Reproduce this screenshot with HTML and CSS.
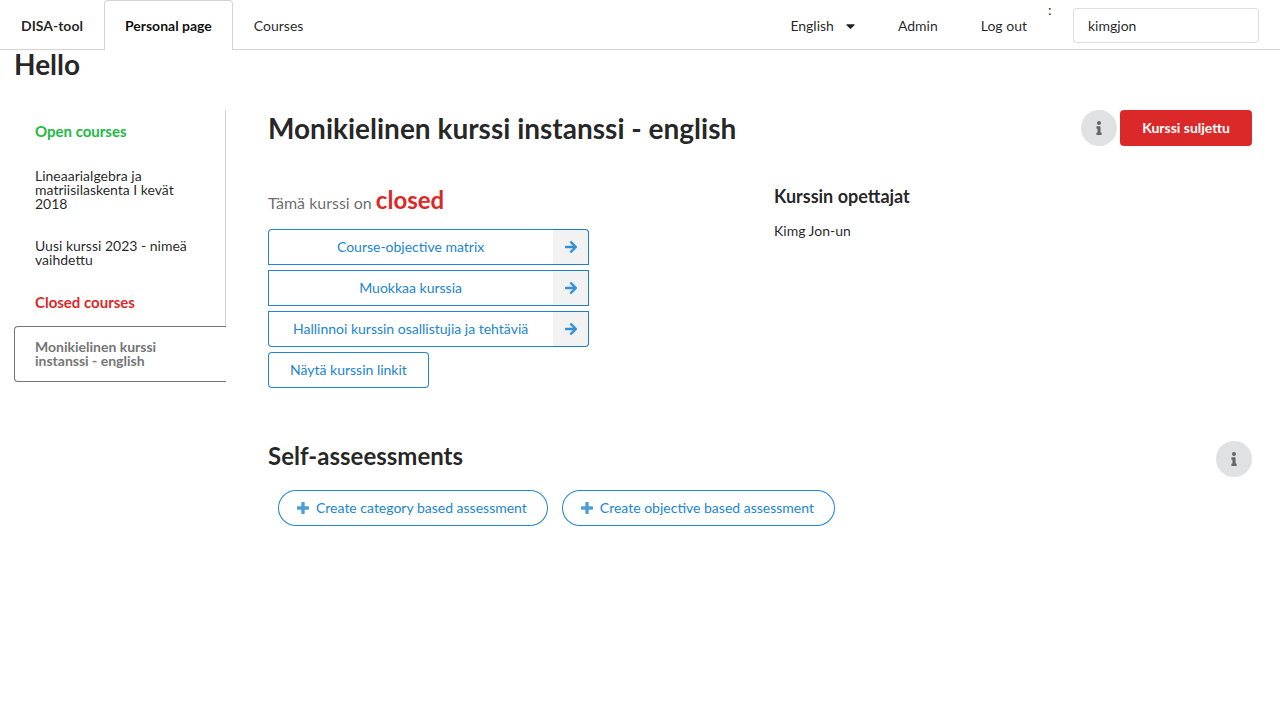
FILE: index.html
```html
<!DOCTYPE html>
<html lang="en">
<head>
<meta charset="utf-8">
<meta name="viewport" content="width=device-width, initial-scale=1">
<title>DISA-tool</title>
<link rel="stylesheet" href="styles.css">
</head>
<body>
<svg class="sprite" aria-hidden="true">
  <symbol id="arrow" viewBox="0 0 448 512"><path d="M190.5 66.9l22.2-22.2c9.4-9.4 24.6-9.4 33.9 0L441 239c9.4 9.4 9.4 24.6 0 33.9L246.6 467.3c-9.4 9.4-24.6 9.4-33.9 0l-22.2-22.2c-9.5-9.5-9.3-25 .4-34.3L311.4 296H24c-13.3 0-24-10.7-24-24v-32c0-13.3 10.7-24 24-24h287.4L190.9 101.2c-9.8-9.3-10-24.8-.4-34.3z"/></symbol>
  <symbol id="plus" viewBox="0 0 448 512"><path d="M448 294.2v-76.4c0-13.3-10.7-24-24-24H286.2V56c0-13.3-10.7-24-24-24h-76.4c-13.3 0-24 10.7-24 24v137.8H24c-13.3 0-24 10.7-24 24v76.4c0 13.3 10.7 24 24 24h137.8V456c0 13.3 10.7 24 24 24h76.4c13.3 0 24-10.7 24-24V318.2H424c13.3 0 24-10.7 24-24z"/></symbol>
  <symbol id="info" viewBox="0 0 192 512"><path d="M20 424.229h20V279.771H20c-11.046 0-20-8.954-20-20V212c0-11.046 8.954-20 20-20h112c11.046 0 20 8.954 20 20v212.229h20c11.046 0 20 8.954 20 20V492c0 11.046-8.954 20-20 20H20c-11.046 0-20-8.954-20-20v-47.771c0-11.046 8.954-20 20-20zM96 0C56.235 0 24 32.235 24 72s32.235 72 72 72 72-32.235 72-72S135.764 0 96 0z"/></symbol>
  <symbol id="caret" viewBox="0 0 320 512"><path d="M31.3 192h257.3c17.8 0 26.7 21.5 14.1 34.1L174.1 354.8c-7.8 7.8-20.5 7.8-28.3 0L17.2 226.1C4.6 213.5 13.5 192 31.3 192z"/></symbol>
</svg>
<nav class="menu">
  <a class="tab brand" href="#">DISA-tool</a>
  <a class="tab active" href="#">Personal page</a>
  <a class="tab" href="#">Courses</a>
  <div class="menu-right">
    <button class="tab language" type="button">English<svg class="caret"><use href="#caret"/></svg></button>
    <a class="tab admin" href="#">Admin</a>
    <a class="tab" href="#">Log out</a>
    <label class="colon" for="user">:</label>
    <div class="user"><input class="user-input" id="user" type="text" value="kimgjon"></div>
  </div>
</nav>
<main class="page">
  <h1 class="hello">Hello</h1>
  <div class="layout">
    <div class="side">
      <nav class="courses">
        <h2 class="group open">Open courses</h2>
        <a class="course" href="#">Lineaarialgebra ja matriisilaskenta I kevät 2018</a>
        <a class="course" href="#">Uusi kurssi 2023 - nimeä vaihdettu</a>
        <h2 class="group closed">Closed courses</h2>
        <a class="course current" href="#">Monikielinen kurssi instanssi - english</a>
      </nav>
    </div>
    <div class="content">
      <header class="row">
        <h2 class="title">Monikielinen kurssi instanssi - english</h2>
        <div class="actions">
          <button class="info" type="button" aria-label="Info"><svg class="info-icon"><use href="#info"/></svg></button>
          <button class="button danger" type="button">Kurssi suljettu</button>
        </div>
      </header>
      <div class="columns">
        <section>
          <p class="status">Tämä kurssi on <strong class="state">closed</strong></p>
          <div class="links">
            <a class="button outline split first" href="#"><span class="label">Course-objective matrix</span><span class="cap"><svg class="icon"><use href="#arrow"/></svg></span></a>
            <a class="button outline split" href="#"><span class="label">Muokkaa kurssia</span><span class="cap"><svg class="icon"><use href="#arrow"/></svg></span></a>
            <a class="button outline split last" href="#"><span class="label">Hallinnoi kurssin osallistujia ja tehtäviä</span><span class="cap"><svg class="icon"><use href="#arrow"/></svg></span></a>
            <button class="button outline single" type="button">Näytä kurssin linkit</button>
          </div>
        </section>
        <section>
          <h3 class="teachers">Kurssin opettajat</h3>
          <div class="teacher">Kimg Jon-un</div>
        </section>
      </div>
      <header class="row assessments">
        <h2 class="subtitle">Self-asseessments</h2>
        <button class="info" type="button" aria-label="Info"><svg class="info-icon"><use href="#info"/></svg></button>
      </header>
      <div class="create">
        <a class="button outline pill" href="#"><svg class="icon plus"><use href="#plus"/></svg>Create category based assessment</a>
        <a class="button outline pill" href="#"><svg class="icon plus"><use href="#plus"/></svg>Create objective based assessment</a>
      </div>
    </div>
  </div>
</main>
</body>
</html>
```

FILE: styles.css
```css
* { box-sizing: border-box; }
body {
  margin: 0;
  background: #fff;
  color: rgba(0, 0, 0, .87);
  font: 14px/20px Lato, "Open Sans", sans-serif;
}
h1, h2, h3, p { margin: 0; }
a { color: inherit; text-decoration: none; }
button, input { font: inherit; color: inherit; }
button { cursor: pointer; }
svg { fill: currentColor; flex: none; }
.sprite { display: none; }

.menu {
  display: flex;
  height: 50px;
  border-bottom: 1px solid #d4d4d5;
}
.tab {
  display: flex;
  align-items: center;
  padding: 2px 20px 0;
  border: 1px solid transparent;
  border-bottom: 0;
  background: none;
  white-space: nowrap;
}
.brand { font-weight: 700; }
.tab.active {
  margin-bottom: -1px;
  padding-bottom: 1px;
  border-color: #d4d4d5;
  border-radius: 4px 4px 0 0;
  background: #fff;
  color: rgba(0, 0, 0, .95);
  font-weight: 700;
}
.menu-right { display: flex; margin-left: auto; }
.admin { padding-left: 21px; padding-right: 21px; }
.caret { width: 9px; height: 14px; margin-left: 12px; }
.colon { width: 4px; }
.user { padding: 8px 21px 0; }
.user-input {
  display: block;
  width: 186px;
  height: 35px;
  padding: 0 14px;
  border: 1px solid rgba(34, 36, 38, .15);
  border-radius: 4px;
  background: #fff;
}

.page { padding: 0 14px; }
.hello { margin: -4px 0 28px; font-size: 28px; line-height: 36px; }
.layout { display: grid; grid-template-columns: 3fr 13fr; margin: 0 -14px; }
.side { padding: 0 14px; }
.courses { border-right: 1px solid #d4d4d5; }
.group { padding: 12px 21px 14px; font-size: 15px; line-height: 19px; }
.open { color: #21ba45; }
.closed { color: #db2828; }
.course { display: block; padding: 14px 21px; line-height: 14px; }
.current {
  margin-right: -1px;
  padding: 13px 20px;
  border: 1px solid #767676;
  border-right: 0;
  border-radius: 4px 0 0 4px;
  background: #fff;
  color: #767676;
  font-weight: 700;
}

.content { padding: 0 28px; }
.row { display: flex; align-items: flex-start; justify-content: space-between; }
.title { font-size: 28px; line-height: 36px; }
.actions { display: flex; gap: 3px; }
.button {
  display: inline-flex;
  align-items: center;
  justify-content: center;
  min-height: 36px;
  padding: 0 21px;
  border: 0;
  border-radius: 4px;
  white-space: nowrap;
}
.danger { padding: 0 22px; background: #db2828; color: #fff; font-weight: 700; }
.info {
  display: flex;
  align-items: center;
  justify-content: center;
  width: 36px;
  height: 36px;
  padding: 0;
  border: 0;
  border-radius: 50%;
  background: #e0e1e2;
  color: #656667;
}
.info-icon { width: 6px; height: 14px; }

.columns { display: grid; grid-template-columns: 1fr 1fr; gap: 28px; margin-top: 38px; }
.status { color: rgba(0, 0, 0, .6); font-size: 16px; line-height: 32px; }
.state { color: #db2828; font-size: 24px; }
.links { display: grid; width: max-content; gap: 5px; margin-top: 10px; }
.outline { background: none; box-shadow: inset 0 0 0 1px #2185d0; color: #2185d0; }
.split { align-items: stretch; padding: 0; border-radius: 0; }
.first { border-radius: 4px 4px 0 0; }
.last { border-radius: 0 0 4px 4px; }
.label { flex: 1; padding: 8px 25px; text-align: center; }
.cap {
  display: flex;
  align-items: center;
  justify-content: center;
  width: 36px;
  background: rgba(0, 0, 0, .05);
}
.icon { width: 12px; height: 14px; opacity: .9; }
.cap .icon { stroke: currentColor; stroke-width: 16; }
.single { justify-self: start; padding: 0 22px; }
.teachers { font-size: 18px; line-height: 24px; }
.teacher { margin-top: 13px; }

.assessments { margin-top: 53px; }
.subtitle { font-size: 24px; line-height: 30px; }
.create { display: flex; flex-wrap: wrap; gap: 14px; margin-top: 13px; padding-left: 10px; }
.pill { border-radius: 18px; padding-left: 19px; }
.plus { margin-right: 7px; opacity: .8; }
```
